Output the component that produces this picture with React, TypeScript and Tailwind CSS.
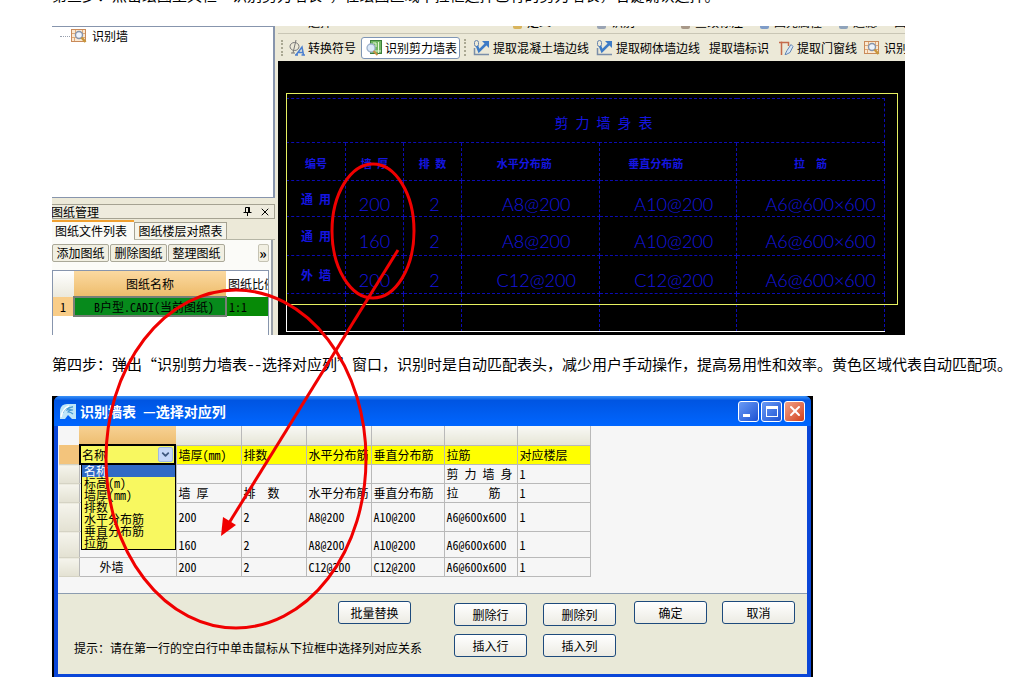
import React from 'react';
import { ChevronDown, X } from 'lucide-react';

const clippedTools = [
  { label: '定义', icon: 'bg-[#d9b45c]' },
  { label: '一', icon: '' },
  { label: '识别', icon: 'bg-[#9aa4b4]' },
  { label: '一', icon: '' },
  { label: '查改标注', icon: 'bg-[#a89888]' },
  { label: '图元属性', icon: 'bg-[#7f9cc8]' },
  { label: '过滤', icon: 'bg-[#8fa3bb]' },
  { label: '图层', icon: '' },
];

const cadRows = [
  { height: 'h-[36px]', cells: ['200', '2', 'A8@200', 'A10@200', 'A6@600×600'], name: '通 用' },
  { height: 'h-[39px]', cells: ['160', '2', 'A8@200', 'A10@200', 'A6@600×600'], name: '通 用' },
  { height: 'h-[38px]', cells: ['200', '2', 'C12@200', 'C12@200', 'A6@600×600'], name: '外 墙' },
];

const options = ['名称', '标高(m)', '墙厚(mm)', '排数', '水平分布筋', '垂直分布筋', '拉筋'];

const mapped = ['墙厚(mm)', '排数', '水平分布筋', '垂直分布筋', '拉筋', '对应楼层'];

const gridRows = [
  { height: 'h-[19px]', cells: ['', '', '', '', '', '剪 力 墙 身', '1'] },
  { height: 'h-[19px]', cells: ['', '墙 厚', '排  数', '水平分布筋', '垂直分布筋', '拉     筋', '1'] },
  { height: 'h-[29px]', cells: ['', '200', '2', 'A8@200', 'A10@200', 'A6@600x600', '1'] },
  { height: 'h-[26px]', cells: ['', '160', '2', 'A8@200', 'A10@200', 'A6@600x600', '1'] },
  { height: 'h-[19px]', cells: ['外墙', '200', '2', 'C12@200', 'C12@200', 'A6@600x600', '1'] },
];

function WallSearchIcon() {
  return (
    <svg width="16" height="16" viewBox="0 0 16 16" className="shrink-0" fill="none">
      <rect x="0.5" y="1.5" width="14" height="12" fill="#fbe9d2" stroke="#c98a5a" />
      <path d="M1 5.5h13M1 9.5h13M4.5 2v3M11.5 2v3M3.5 10v3" stroke="#dca878" />
      <circle cx="8" cy="7" r="3.5" fill="#eef4fc" stroke="#8694ac" strokeWidth="1.4" />
      <path d="M10.5 9.5l4 4.5" stroke="#c8963c" strokeWidth="2.5" />
    </svg>
  );
}

function SymbolIcon() {
  return (
    <svg width="16" height="16" viewBox="0 0 16 16" className="shrink-0" fill="none">
      <ellipse cx="5.5" cy="6.5" rx="4.5" ry="4" stroke="#777" />
      <path d="M7 0L4 13M2 13h4" stroke="#777" />
      <path d="M7 15l6-8 1.5 8M9.5 12.5h4M6 15h3M12.5 15H16" stroke="#4a7fd0" strokeWidth="1.5" />
    </svg>
  );
}

function SheetIcon() {
  return (
    <svg width="16" height="16" viewBox="0 0 16 16" className="shrink-0" fill="none">
      <rect x="4.5" y="0.5" width="11" height="13" fill="#6fb662" stroke="#3a7d3a" />
      <path d="M7 3h3v4M12.5 2v11M9 11h6" stroke="#e5f6d8" />
      <circle cx="5" cy="8" r="4" fill="#dbe9f8" stroke="#9fb2cc" strokeWidth="1.3" />
      <path d="M7.5 11l4 4" stroke="#c98f45" strokeWidth="2" />
    </svg>
  );
}

function EdgeIcon() {
  return (
    <svg width="17" height="16" viewBox="0 0 17 16" className="shrink-0" fill="none">
      <path d="M1.5 8v6.5H16" stroke="#7a8ea8" strokeWidth="1.5" />
      <rect x="1.5" y="0.5" width="4" height="6" rx="2" stroke="#6583ad" />
      <path d="M4 6l2 5 8-8" stroke="#3d7bc6" strokeWidth="2.5" />
      <path d="M9 1h7v7z" fill="#3d7bc6" />
    </svg>
  );
}

function DoorIcon() {
  return (
    <svg width="15" height="16" viewBox="0 0 15 16" className="shrink-0" fill="none">
      <path d="M2.5 15V1.5M0 2.5h9.5V6" stroke="#c46a4a" strokeWidth="1.5" />
      <path d="M6 14.500l2-4 4-6 2 2-3 6-4 2z" fill="#d5e6f8" stroke="#6587b5" />
    </svg>
  );
}

function Grip() {
  return <span className="h-4 w-0 shrink-0 border-l-2 border-dotted border-[#aaa893]" />;
}

function TreePanel() {
  return (
    <div className="flex h-[172px] items-start border-t border-r-2 border-b border-[#8795ad] bg-white pt-px pl-2">
      <span className="mt-2 mr-px w-[10px] border-t border-dotted border-gray-400" />
      <WallSearchIcon />
      <span className="ml-[5px] leading-4">识别墙</span>
    </div>
  );
}

function DrawingPanel() {
  const tool =
    'h-[18px] w-[57px] shrink-0 overflow-hidden rounded-[2px] border border-[#aaa899] bg-[#f1efe2] leading-4 whitespace-nowrap';
  return (
    <section className="mt-[6px] flex flex-1 flex-col">
      <header className="flex h-[15px] items-center border border-l-0 border-[#a5a292] bg-[#eeebdd] pr-[3px]">
        <span className="-ml-px">图纸管理</span>
        <button aria-label="固定" className="ml-auto">
          <svg width="9" height="9" viewBox="0 0 9 9" fill="none" stroke="#000">
            <path d="M2.5 5V0.5h4V5M0.5 5.500h8M4.500 5.500V9" />
            <path d="M6 0.500V5" strokeWidth="2" />
          </svg>
        </button>
        <button aria-label="关闭" className="ml-[7px]">
          <X size={12} strokeWidth={2} />
        </button>
      </header>
      <div className="flex h-[21px] items-end border-b border-[#b5b5a5]">
        <button className="-mb-px h-5 w-[82px] border-t-2 border-[#f0a030] bg-[#fafaf6] pr-1 leading-[16px] whitespace-nowrap">
          图纸文件列表
        </button>
        <button className="h-[17px] w-[93px] border border-b-0 border-[#a5a292] bg-[#f5f4ea] leading-4 whitespace-nowrap">
          图纸楼层对照表
        </button>
      </div>
      <div className="mr-[2px] flex flex-1 flex-col border-r-2 border-[#9aa0a8] bg-[#fbfbf8]">
        <div className="flex gap-px pt-1">
          <button className={tool}>添加图纸</button>
          <button className={tool}>删除图纸</button>
          <button className={tool}>整理图纸</button>
          <button className="mr-[2px] ml-auto h-[18px] w-[11px] rounded-[2px] border border-[#c5c3b4] bg-[#f1efe2] text-[14px] leading-3 font-bold">
            <span className="-ml-px">»</span>
          </button>
        </div>
        <div className="mt-2 mr-[2px] flex-1 overflow-hidden border border-b-0 border-[#8795ad] bg-white">
          <table className="w-full table-fixed border-collapse">
            <colgroup>
              <col className="w-[21px]" />
              <col className="w-[152px]" />
              <col />
            </colgroup>
            <thead>
              <tr className="h-[26px]">
                <th className="bg-linear-to-b from-white to-[#ebe9dc]" />
                <th className="bg-linear-to-b from-[#fbd9a0] to-[#eebd6c] font-normal">图纸名称</th>
                <th className="overflow-hidden pl-[2px] text-left font-normal whitespace-nowrap">图纸比例</th>
              </tr>
            </thead>
            <tbody>
              <tr className="h-[19px]">
                <td className="bg-[#f9cd88] text-center">1</td>
                <td className="border-2 border-[#777f77] bg-[#078a1c] pl-2 text-center leading-[14px] whitespace-nowrap">
                  B户型.CADI(当前图纸)
                </td>
                <td className="bg-[#078a07] pl-[2px]">1:1</td>
              </tr>
            </tbody>
          </table>
        </div>
      </div>
    </section>
  );
}

function Toolbar() {
  return (
    <div className="bg-[#ece9d8]">
      <div className="flex h-2 overflow-hidden border-b border-[#c9c6b5] pl-[30px]">
        <div className="-mt-[11px] flex h-[19px] gap-[17px] leading-[14px] whitespace-nowrap">
          <span className="mr-[164px]">选择</span>
          {clippedTools.map(({ label, icon }, i) => (
            <span key={i} className="flex gap-[5px]">
              {icon && <span className={`h-[14px] w-[9px] rounded-b-[2px] ${icon}`} />}
              {label}
            </span>
          ))}
        </div>
      </div>
      <div className="flex h-[27px] items-center overflow-hidden pl-[3px] whitespace-nowrap">
        <Grip />
        <button className="ml-[6px] flex items-center gap-[3px]">
          <SymbolIcon />
          转换符号
        </button>
        <button className="ml-[5px] flex h-[22px] w-[99px] shrink-0 items-center gap-[3px] rounded-[3px] border border-[#7e95b5] bg-white pl-1">
          <SheetIcon />
          识别剪力墙表
        </button>
        <span className="ml-1">
          <Grip />
        </span>
        <button className="ml-[7px] flex items-center gap-[3px]">
          <EdgeIcon />
          提取混凝土墙边线
        </button>
        <button className="ml-[7px] flex items-center gap-[3px]">
          <EdgeIcon />
          提取砌体墙边线
        </button>
        <button className="ml-[9px]">提取墙标识</button>
        <button className="ml-[10px] flex items-center gap-[3px]">
          <DoorIcon />
          提取门窗线
        </button>
        <button className="ml-[7px] flex items-center gap-1">
          <WallSearchIcon />
          识别墙
        </button>
      </div>
    </div>
  );
}

function CadCanvas() {
  const cell = 'border border-dashed border-[#0c0cb4] p-0';
  const pads = ['', 'pl-1', 'pl-3', 'pl-3', 'pl-5'];
  return (
    <div className="flex-1 bg-black pt-[37px] pr-5 pl-2">
      <div className="relative">
        <table className="w-full table-fixed border-collapse text-center text-[#1515e0]">
          <colgroup>
            <col className="w-[59px]" />
            <col className="w-[58px]" />
            <col className="w-[58px]" />
            <col className="w-[23%]" />
            <col className="w-[23%]" />
            <col />
          </colgroup>
          <thead>
            <tr className="h-11">
              <th colSpan={6} className={`${cell} pt-1 pl-9 text-[14px] font-medium`}>
                剪 力 墙 身 表
              </th>
            </tr>
            <tr className="h-[38px] text-[11px] whitespace-pre">
              <th className={`${cell} pt-1`}>编号</th>
              <th className={`${cell} pt-1`}>墙 厚</th>
              <th className={`${cell} pt-1`}>排 数</th>
              <th className={`${cell} pt-1 pr-3`}>水平分布筋</th>
              <th className={`${cell} pt-1 pr-6`}>垂直分布筋</th>
              <th className={`${cell} pt-1`}>拉  筋</th>
            </tr>
          </thead>
          <tbody className="font-[Lato,sans-serif] text-[18px] font-light">
            {cadRows.map((row, i) => (
              <tr key={i} className={row.height}>
                <td className={`${cell} font-['Noto_Sans_Mono_CJK_SC','Noto_Sans_CJK_SC',sans-serif] text-[12px] leading-4 font-bold`}>
                  {row.name}
                </td>
                {row.cells.map((value, j) => (
                  <td key={j} className={`${cell} pt-[10px] leading-5 ${pads[j]}`}>
                    {value}
                  </td>
                ))}
              </tr>
            ))}
            <tr className="h-[38px]">
              <td className={cell} />
              <td className={cell} />
              <td className={cell} />
              <td className={cell} />
              <td className={cell} />
              <td className={cell} />
            </tr>
          </tbody>
        </table>
        <div className="absolute -top-[5px] -right-[13px] bottom-[27px] left-0 border border-[#e6f060]" />
        <div className="absolute bottom-0 left-0 h-[27px] w-full border-b border-l border-white" />
      </div>
    </div>
  );
}

function MappingGrid() {
  const cell = 'overflow-hidden border border-[#b9b9b9] p-0 pl-[2px] whitespace-pre';
  return (
    <div className="h-[168px] border-b border-[#8c9cb0] bg-[#f6f6f6] pl-px">
      <table className="w-[531px] table-fixed border-collapse text-left">
        <colgroup>
          <col className="w-5" />
          <col className="w-[97px]" />
          <col className="w-[65px]" />
          <col className="w-[65px]" />
          <col className="w-[65px]" />
          <col className="w-[73px]" />
          <col className="w-[73px]" />
          <col className="w-[73px]" />
        </colgroup>
        <thead>
          <tr className="h-[19px]">
            <th />
            <th className="bg-linear-to-b from-[#f7d193] to-[#edbd6f]" />
            {mapped.map((name) => (
              <th key={name} className="border-r border-[#b9b9b9] bg-linear-to-b from-[#f8f8f5] to-[#e6e5d6]" />
            ))}
          </tr>
        </thead>
        <tbody>
          <tr className="h-[19px]">
            <td className="bg-[#f3c47c]" />
            <td className="p-0">
              <div className="relative -my-px h-[21px] border-2 border-black bg-[#f8f860]">
                <select
                  aria-label="对应列"
                  defaultValue="名称"
                  className="block h-[17px] w-full appearance-none bg-transparent pl-px leading-4 outline-none"
                >
                  {options.map((name) => (
                    <option key={name}>{name}</option>
                  ))}
                </select>
                <span className="pointer-events-none absolute top-px right-px flex h-[15px] w-[15px] items-center justify-center rounded-[2px] border border-[#9db9e6] bg-[#c6d7f8] text-[#3f587f]">
                  <ChevronDown size={11} strokeWidth={4} />
                </span>
                <ul className="absolute top-[18px] left-0 z-10 w-[95px] border border-black bg-[#f8f860] leading-3">
                  {options.map((name, i) => (
                    <li key={name} className={i === 0 ? 'bg-[#316ac5] pl-[2px] text-white' : 'pl-[2px]'}>
                      {name}
                    </li>
                  ))}
                </ul>
              </div>
            </td>
            {mapped.map((name) => (
              <td key={name} className={`${cell} bg-[#ffff00]`}>
                {name}
              </td>
            ))}
          </tr>
          {gridRows.map((row, i) => (
            <tr key={i} className={row.height}>
              <td className="border-y border-[#d5d3c4] bg-linear-to-b from-[#f5f4ec] to-[#e3e1d2]" />
              {row.cells.map((value, j) => (
                <td key={j} className={j === 0 ? `${cell} pl-[20px]` : cell}>
                  {value}
                </td>
              ))}
            </tr>
          ))}
        </tbody>
      </table>
    </div>
  );
}

function DialogButton({ children, className = '' }: { children: React.ReactNode; className?: string }) {
  return (
    <button
      className={`h-[23px] w-[73px] rounded-[3px] border border-[#1d4a7c] bg-linear-to-b from-white to-[#ecebe3] leading-5 ${className}`}
    >
      {children}
    </button>
  );
}

function MappingDialog() {
  const control = 'flex h-[21px] w-[21px] items-center justify-center rounded-[3px] border border-white text-white';
  return (
    <section className="w-full max-w-[761px] border-x-2 border-black bg-black">
      <div className="rounded-t-[6px] border-x-4 border-b-[3px] border-[#0a46d8] bg-[#0a46d8]">
        <header className="-mx-1 flex h-[30px] items-center rounded-t-[6px] bg-linear-to-b from-[#3a92f8] via-[#0055e2] via-15% to-[#0066ff] pr-[6px] pl-[6px]">
          <svg width="16" height="17" viewBox="0 0 16 17" fill="none">
            <path d="M0 16V7q1-6 7-6h9v15h-4l-4-4-3 4z" fill="#bfe6f8" />
            <path d="M3 10q1-6 10-6-5 1-6 3 3-1 6 0-4 0-5 2 3 0 5 2" stroke="#4a9cd4" strokeWidth="1.2" />
            <path d="M1 14c1-5 3-9 8-11" stroke="#fff" strokeWidth="1.5" />
          </svg>
          <h2 className="ml-1 text-[14px] font-bold whitespace-pre text-white">识别墙表 —选择对应列</h2>
          <div className="ml-auto flex gap-[2px]">
            <button aria-label="最小化" className={`${control} bg-linear-to-br from-[#6b9af5] to-[#1c50d2]`}>
              <span className="mt-[9px] mr-[5px] h-[3px] w-[7px] bg-white" />
            </button>
            <button aria-label="最大化" className={`${control} bg-linear-to-br from-[#6b9af5] to-[#1c50d2]`}>
              <span className="h-[11px] w-[12px] border border-t-[3px] border-white" />
            </button>
            <button aria-label="关闭" className={`${control} bg-linear-to-br from-[#f0a088] to-[#d03c10]`}>
              <X size={16} strokeWidth={3} />
            </button>
          </div>
        </header>
        <MappingGrid />
        <footer className="flex h-20 items-start bg-[#e9e9d8] pt-[7px] pr-3">
          <div className="flex flex-1 flex-col pl-4">
            <DialogButton className="mr-[43px] self-end">批量替换</DialogButton>
            <p className="mt-4 leading-4 whitespace-nowrap">
              提示：请在第一行的空白行中单击鼠标从下拉框中选择列对应关系
            </p>
          </div>
          <div className="mt-[2px] grid grid-cols-2 gap-x-4 gap-y-2">
            <DialogButton>删除行</DialogButton>
            <DialogButton>删除列</DialogButton>
            <DialogButton>插入行</DialogButton>
            <DialogButton>插入列</DialogButton>
          </div>
          <DialogButton className="ml-[18px]">确定</DialogButton>
          <DialogButton className="ml-[15px]">取消</DialogButton>
        </footer>
      </div>
    </section>
  );
}

function Annotations() {
  return (
    <svg
      width="440"
      height="640"
      viewBox="0 0 440 640"
      className="pointer-events-none absolute top-0 left-0 z-20"
      fill="none"
      stroke="#f00000"
      strokeWidth="3"
    >
      <ellipse cx="373" cy="231" rx="41" ry="67" />
      <ellipse cx="236" cy="459" rx="130" ry="169" />
      <path d="M398 250L229 523" />
      <path d="M221 536l2-19 13 8z" fill="#f00000" stroke="none" />
    </svg>
  );
}

export default function App() {
  return (
    <main className="relative bg-white pl-[52px] font-['Noto_Sans_Mono_CJK_SC','Noto_Sans_CJK_SC',sans-serif] text-[12px] text-black">
      <div className="h-[26px] overflow-hidden">
        <p className="-mt-[15px] text-[15px] leading-5 whitespace-nowrap">
          第三步：点击绘图工具栏“识别剪力墙表”，在绘图区域中拉框选择已有的剪力墙表，右键确认选择。
        </p>
      </div>

      <figure className="flex h-[309px] w-full max-w-[853px]">
        <div className="flex w-[226px] shrink-0 flex-col overflow-hidden bg-[#ece9d8] pr-[3px]">
          <TreePanel />
          <DrawingPanel />
        </div>
        <div className="flex min-w-0 flex-1 flex-col overflow-hidden">
          <Toolbar />
          <CadCanvas />
        </div>
      </figure>

      <p className="pt-[17px] pb-[21px] text-[15px] leading-[23px] whitespace-nowrap">
        第四步：弹出“识别剪力墙表--选择对应列”窗口，识别时是自动匹配表头，减少用户手动操作，提高易用性和效率。黄色区域代表自动匹配项。
      </p>

      <MappingDialog />
      <Annotations />
    </main>
  );
}
